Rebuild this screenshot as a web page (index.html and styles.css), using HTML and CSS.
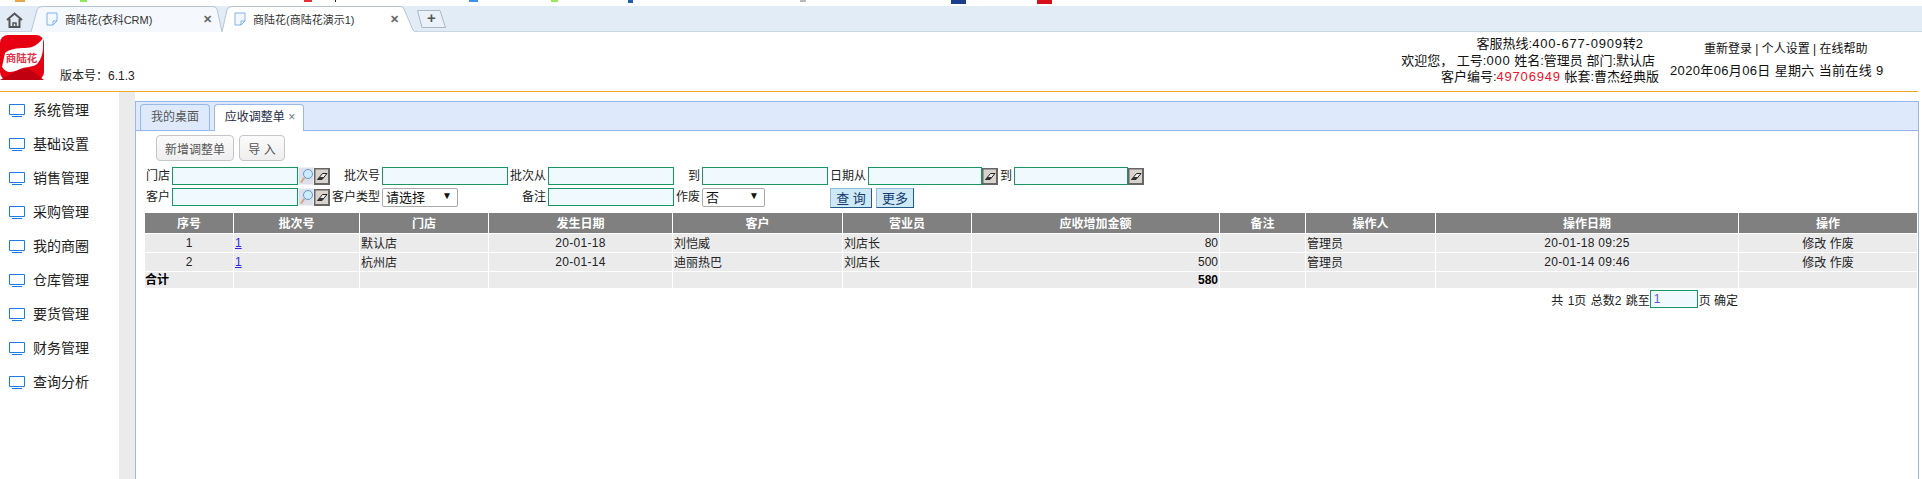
FILE: index.html
```
<!DOCTYPE html>
<html lang="zh-CN">
<head>
<meta charset="utf-8">
<title>商陆花</title>
<link rel="stylesheet" href="styles.css">
</head>
<body>
<svg class="defs" width="0" height="0">
  <defs>
    <symbol id="doc" viewBox="0 0 12 14"><path d="M1 1h10v8l-4 4H1zM7 13V9h4" fill="#f4f9ff" stroke="#7fb2ee" stroke-width="1"/></symbol>
    <symbol id="monitor" viewBox="0 0 16 13"><path d="M.5.5h15v10H.5z" fill="none" stroke="#1b7ce8"/><path d="M3 12.5h10" stroke="#1b7ce8"/></symbol>
    <symbol id="search" viewBox="0 0 16 18"><rect width="16" height="18" fill="#dde0ea"/><path d="M.5.5h15v17H.5z" fill="none" stroke="#eef0f5"/><circle cx="10" cy="7" r="4.500" fill="#cdeaff" stroke="#5d9bd0"/><path d="M6.500 10.500L3 15.500" stroke="#d2a878" stroke-width="2"/></symbol>
    <symbol id="eraser" viewBox="0 0 16 17"><rect width="16" height="17" fill="#666"/><rect x="1.500" y="1.500" width="12.500" height="13.500" fill="#d8d4cc"/><path d="M3.500 11.500l5-6h4.500l-5 6z" fill="#eee" stroke="#222" stroke-width="1"/><path d="M3.500 11.500l2.200-2.600h4.500l-2.200 2.600z" fill="#333"/></symbol>
  </defs>
</svg>

<div class="top-strip"></div>

<div class="browser-bar">
  <div class="home">
    <svg width="17" height="16" viewBox="0 0 17 16"><path d="M1 8l7.500-6.500L16 8M3.500 7v8h10V7" fill="none" stroke="#555" stroke-width="2"/><path d="M7 15v-4h3v4" fill="none" stroke="#555" stroke-width="1.500"/></svg>
  </div>
  <div class="b-tab b-tab-back">
    <svg class="b-tab-shape" viewBox="0 0 191 26" preserveAspectRatio="none"><path d="M0 26L6 4Q7 .5 11 .5H182Q185 .5 186 3L191 26" fill="#f5f9fe" stroke="#b8c4d2"/></svg>
    <svg class="b-doc" width="12" height="14"><use href="#doc"/></svg>
    <span class="b-title">商陆花(衣科CRM)</span>
    <span class="b-close">✕</span>
  </div>
  <div class="b-tab b-tab-front">
    <svg class="b-tab-shape" viewBox="0 0 195 26" preserveAspectRatio="none"><path d="M0 26L5 4Q6 .5 10 .5H178Q181 .5 182 3L191 24Q192 26 195 26" fill="#fff" stroke="#b8c4d2"/></svg>
    <svg class="b-doc" width="12" height="14"><use href="#doc"/></svg>
    <span class="b-title">商陆花(商陆花演示1)</span>
    <span class="b-close">✕</span>
  </div>
  <div class="b-new">
    <svg class="b-tab-shape" viewBox="0 0 29 18" preserveAspectRatio="none"><path d="M.5 .5H23L28.500 17.500H5z" fill="#eaf1f9" stroke="#aab6c4"/></svg>
    <span class="b-plus">+</span>
  </div>
</div>

<header class="app-header">
  <div class="logo">
    <svg width="44" height="45" viewBox="0 0 44 45">
      <rect width="44" height="45" rx="8" fill="#e60012"/>
      <path d="M0 45L16 36 28 33 44 45z" fill="#c00010"/>
      <path d="M43 3C38 10 32 13 25 13S9 14 5 18L2 32C4 35 7 37 10 37 15 37 19 34 23 33 29 32 36 31 38 28 41 24 43 18 43 13z" fill="#fff"/>
      <text x="21.500" y="27" class="logo-text">商陆花</text>
    </svg>
  </div>
  <div class="version">版本号&#xFF1A;6.1.3</div>
  <div class="user-info">
    <div class="line-hot">客服热线:<span class="wide">400-677-0909</span>转2</div>
    <div class="line-user">欢迎您&#xFF0C;&nbsp;工号:<span class="wide">000</span> 姓名:管理员 部门:默认店</div>
    <div>客户编号:<span class="red wide">49706949</span> 帐套:曹杰经典版</div>
  </div>
  <div class="session">
    <div class="links">重新登录 | 个人设置 | 在线帮助</div>
    <div class="date">2020年06月06日 星期六 当前在线 9</div>
  </div>
</header>

<div class="main">
  <nav class="sidebar">
    <div class="nav-item"><svg width="16" height="13"><use href="#monitor"/></svg><span>系统管理</span></div>
    <div class="nav-item"><svg width="16" height="13"><use href="#monitor"/></svg><span>基础设置</span></div>
    <div class="nav-item"><svg width="16" height="13"><use href="#monitor"/></svg><span>销售管理</span></div>
    <div class="nav-item"><svg width="16" height="13"><use href="#monitor"/></svg><span>采购管理</span></div>
    <div class="nav-item"><svg width="16" height="13"><use href="#monitor"/></svg><span>我的商圈</span></div>
    <div class="nav-item"><svg width="16" height="13"><use href="#monitor"/></svg><span>仓库管理</span></div>
    <div class="nav-item"><svg width="16" height="13"><use href="#monitor"/></svg><span>要货管理</span></div>
    <div class="nav-item"><svg width="16" height="13"><use href="#monitor"/></svg><span>财务管理</span></div>
    <div class="nav-item"><svg width="16" height="13"><use href="#monitor"/></svg><span>查询分析</span></div>
  </nav>
  <div class="splitter"></div>
  <section class="panel">
    <div class="panel-tabs">
      <div class="p-tab">我的桌面</div>
      <div class="p-tab p-tab-active">应收调整单 <span class="p-close">×</span></div>
    </div>
    <div class="toolbar">
      <button class="tool-btn btn-add">新增调整单</button>
      <button class="tool-btn btn-import">导 入</button>
    </div>
    <div class="filter">
      <div class="filter-row">
        <label class="l26">门店</label><input class="inp w126"><svg class="ic-s"><use href="#search"/></svg><svg class="ic-e"><use href="#eraser"/></svg>
        <label class="l52">批次号</label><input class="inp w126">
        <label class="l40">批次从</label><input class="inp w126">
        <label class="l28">到</label><input class="inp w126">
        <label class="l40">日期从</label><input class="inp w114"><svg class="ic-e"><use href="#eraser"/></svg>
        <label class="l16">到</label><input class="inp w114"><svg class="ic-e"><use href="#eraser"/></svg>
      </div>
      <div class="filter-row">
        <label class="l26">客户</label><input class="inp w126"><svg class="ic-s"><use href="#search"/></svg><svg class="ic-e"><use href="#eraser"/></svg>
        <label class="l52">客户类型</label><div class="sel w76"><span>请选择</span><i>▼</i></div>
        <label class="l90">备注</label><input class="inp w126">
        <label class="l28">作废</label><div class="sel w63"><span>否</span><i>▼</i></div>
        <button class="q-btn btn-query">查 询</button>
        <button class="q-btn btn-more">更多</button>
      </div>
    </div>
    <table class="grid">
      <colgroup><col class="c1"><col class="c2"><col class="c3"><col class="c4"><col class="c5"><col class="c6"><col class="c7"><col class="c8"><col class="c9"><col class="c10"><col class="c11"></colgroup>
      <thead>
        <tr><th>序号</th><th>批次号</th><th>门店</th><th>发生日期</th><th>客户</th><th>营业员</th><th>应收增加金额</th><th>备注</th><th>操作人</th><th>操作日期</th><th>操作</th></tr>
      </thead>
      <tbody>
        <tr><td class="ctr">1</td><td><a href="#">1</a></td><td>默认店</td><td class="ctr dt">20-01-18</td><td>刘恺威</td><td>刘店长</td><td class="num">80</td><td></td><td>管理员</td><td class="ctr dt">20-01-18 09:25</td><td class="ctr">修改 作废</td></tr>
        <tr><td class="ctr">2</td><td><a href="#">1</a></td><td>杭州店</td><td class="ctr dt">20-01-14</td><td>迪丽热巴</td><td>刘店长</td><td class="num">500</td><td></td><td>管理员</td><td class="ctr dt">20-01-14 09:46</td><td class="ctr">修改 作废</td></tr>
        <tr class="total"><td class="sum-label">合计</td><td></td><td></td><td></td><td></td><td></td><td class="num">580</td><td></td><td></td><td></td><td></td></tr>
      </tbody>
    </table>
    <div class="pager">
      <span class="pager-info">共 1页 总数2 跳至</span><input class="inp pager-input" value="1"><span>页 确定</span>
    </div>
  </section>
</div>
</body>
</html>
```
FILE: styles.css
```
* { box-sizing: border-box; }
html, body { margin: 0; padding: 0; }
body {
  width: 1922px;
  height: 479px;
  overflow: hidden;
  background: #fff;
  color: #111;
  font-family: "Liberation Sans", "Noto Sans CJK SC", sans-serif;
  font-size: 12px;
}
.defs { display: block; height: 0; }

.top-strip {
  height: 6px;
  background-color: #fff;
  background-repeat: no-repeat;
  background-image:
    linear-gradient(#e8a84a, #e8a84a), linear-gradient(#8fe85a, #8fe85a),
    linear-gradient(#e8303a, #e8303a), linear-gradient(#222, #222),
    linear-gradient(#3f8ff0, #3f8ff0), linear-gradient(#9be85a, #9be85a),
    linear-gradient(#1a5fb0, #1a5fb0), linear-gradient(#bbb, #bbb),
    linear-gradient(#1c3f8c, #1c3f8c), linear-gradient(#d8101c, #d8101c);
  background-size: 10px 2px, 7px 2px, 8px 2px, 1px 2px, 9px 2px, 7px 2px, 5px 3px, 6px 2px, 15px 4px, 15px 4px;
  background-position: 15px 0, 80px 0, 304px 0, 335px 0, 469px 0, 551px 0, 628px 0, 800px 0, 951px 0, 1037px 0;
}

.browser-bar {
  display: flex;
  height: 26px;
  background: #e2ecf7;
  border-bottom: 1px solid #c8d6e6;
}
.home { width: 31px; padding: 6px 0 0 6px; }
.home svg { display: block; }
.b-tab {
  position: relative;
  display: flex;
  align-items: center;
  height: 26px;
  color: #333;
}
.b-tab-back { width: 191px; padding: 0 10px 0 15px; }
.b-tab-front { width: 195px; padding: 0 18px 0 12px; }
.b-tab-shape { position: absolute; left: 0; top: 0; width: 100%; height: 100%; }
.b-doc, .b-title, .b-close { position: relative; }
.b-doc { flex: none; }
.b-title { flex: 1; margin-left: 7px; white-space: nowrap; font-size: 11px; }
.b-close { color: #666; font-size: 11px; font-weight: bold; }
.b-new {
  position: relative;
  width: 29px;
  height: 18px;
  margin-top: 4px;
  text-align: center;
}
.b-plus { position: relative; font-size: 15px; line-height: 16px; font-weight: bold; color: #555; }

.app-header {
  display: flex;
  width: 1918px;
  height: 60px;
  border-bottom: 1px solid #f5a623;
}
.logo { width: 44px; padding-top: 3px; }
.logo svg { display: block; }
.logo-text { font-size: 10.500px; font-weight: bold; fill: #e2334c; text-anchor: middle; }
.version { margin: 37px 0 0 16px; line-height: 14px; color: #222; width: 1100px; }
.user-info {
  width: 499px;
  padding-top: 4px;
  font-size: 13px;
  line-height: 16.500px;
  text-align: right;
}
.line-hot { padding-right: 16px; }
.line-user { padding-right: 4px; }
.wide { letter-spacing: .8px; }
.red { color: #f01030; }
.session { margin-left: 11px; width: 213px; padding-top: 9px; }
.links { margin-left: 34px; line-height: 16px; white-space: nowrap; }
.date { margin-top: 5px; font-size: 13px; line-height: 18px; letter-spacing: .35px; white-space: nowrap; }

.main { display: flex; height: 387px; }
.sidebar { width: 119px; }
.nav-item {
  display: flex;
  align-items: center;
  height: 34px;
  padding-left: 9px;
  font-size: 14px;
  color: #222;
}
.nav-item svg { flex: none; margin-top: 2px; }
.nav-item span { margin-left: 8px; }
.splitter { width: 16px; background: #ebebeb; }
.panel {
  width: 1784px;
  margin-top: 9px;
  border: 1px solid #94b9ea;
  border-bottom: 0;
}
.panel-tabs {
  display: flex;
  gap: 4px;
  height: 29px;
  padding: 2px 0 0 4px;
  background: #deeafc;
  border-bottom: 1px solid #94b9ea;
}
.p-tab {
  height: 26px;
  width: 70px;
  border: 1px solid #94b9ea;
  border-bottom: 0;
  border-radius: 4px 4px 0 0;
  color: #555;
  line-height: 25px;
  text-align: center;
}
.p-tab-active {
  width: 90px;
  height: 27px;
  padding-left: 2px;
  background: #fff;
  color: #1c2a44;
  white-space: nowrap;
}
.p-close { color: #678; }

.toolbar { display: flex; gap: 5px; padding: 4px 0 0 20px; height: 36px; }
.tool-btn {
  height: 26px;
  padding: 0;
  border: 1px solid #c6c6c6;
  border-radius: 4px;
  background: linear-gradient(#fbfbfb, #efefef);
  color: #555;
  font: inherit;
}
.btn-add { width: 78px; }
.btn-import { width: 46px; }

.filter { padding-left: 10px; }
.filter-row { display: flex; height: 18px; margin-bottom: 3px; align-items: flex-start; }
.filter-row label { flex: none; height: 18px; line-height: 18px; padding-right: 2px; text-align: right; color: #222; white-space: nowrap; }
.l16 { width: 16px; }
.l26 { width: 26px; }
.l28 { width: 28px; }
.l40 { width: 40px; }
.l52 { width: 52px; }
.l90 { width: 90px; }
.inp {
  flex: none;
  height: 18px;
  padding: 0 3px;
  border: 1px solid #1a9663;
  background: #eff9fe;
  color: #5a5ad0;
  font: inherit;
  outline: 0;
}
.w126 { width: 126px; }
.w114 { width: 114px; }
.ic-s { flex: none; width: 16px; height: 18px; }
.ic-e { flex: none; width: 16px; height: 17px; margin-top: 1px; }
.sel {
  flex: none;
  display: flex;
  justify-content: space-between;
  height: 19px;
  padding: 0 5px 0 3px;
  border: 1px solid #aaa;
  border-radius: 2px;
  font-size: 13px;
  line-height: 17px;
  background: #fff;
}
.sel i { font-style: normal; font-size: 10px; line-height: 14px; }
.w76 { width: 76px; }
.w63 { width: 63px; }
.q-btn {
  flex: none;
  height: 20px;
  padding: 0;
  border: 1px solid;
  border-color: #8fbcd8 #1f5a8a #1f5a8a #8fbcd8;
  background: #cfe8f5;
  color: #123a70;
  font: inherit;
  font-size: 13px;
  line-height: 17px;
}
.btn-query { width: 42px; margin-left: 65px; }
.btn-more { width: 38px; margin-left: 4px; }

.grid {
  width: 1772px;
  margin: 7px 0 0 9px;
  table-layout: fixed;
  border-collapse: separate;
  border-spacing: 0;
}
.c1 { width: 89px; }
.c2 { width: 126px; }
.c3 { width: 129px; }
.c4 { width: 184px; }
.c5 { width: 170px; }
.c6 { width: 129px; }
.c7 { width: 248px; }
.c8 { width: 86px; }
.c9 { width: 130px; }
.c10 { width: 303px; }
.c11 { width: 178px; }
.grid th {
  height: 21px;
  padding: 0 0 1px;
  background: #808080;
  color: #fff;
  font-weight: bold;
  border-right: 1px solid #fff;
  border-bottom: 1px solid #fff;
}
.grid td {
  height: 19px;
  padding: 0 1px 1px 1px;
  background: #ebebeb;
  color: #222;
  border-right: 1px solid #fff;
  border-bottom: 1px solid #fff;
  white-space: nowrap;
}
.grid th:last-child, .grid td:last-child { border-right: 0; }
.grid .total td { height: 16px; padding-bottom: 0; border-bottom: 0; font-weight: bold; color: #000; line-height: 14px; }
.grid .total .sum-label { padding-left: 0; }
.ctr { text-align: center; }
.dt { letter-spacing: .3px; }
.grid .num { text-align: right; padding-right: 1px; }
.grid a { color: #2a2ae8; }

.pager {
  display: flex;
  justify-content: flex-end;
  align-items: center;
  width: 1602px;
  margin-top: 2px;
  height: 18px;
  color: #222;
}
.pager-info { word-spacing: 1px; }
.pager-input { width: 48px; margin-right: 1px; }
```
